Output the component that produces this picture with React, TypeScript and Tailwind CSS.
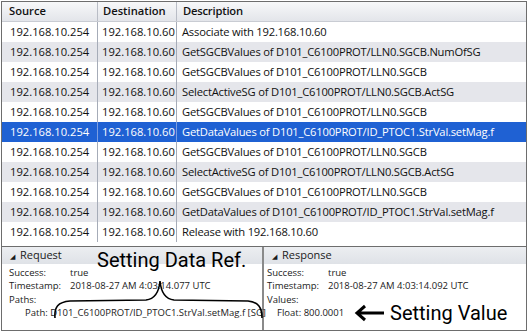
const rows: [string, string, string][] = [
  ['192.168.10.254', '192.168.10.60', 'Associate with 192.168.10.60'],
  ['192.168.10.254', '192.168.10.60', 'GetSGCBValues of D101_C6100PROT/LLN0.SGCB.NumOfSG'],
  ['192.168.10.254', '192.168.10.60', 'GetSGCBValues of D101_C6100PROT/LLN0.SGCB'],
  ['192.168.10.254', '192.168.10.60', 'SelectActiveSG of D101_C6100PROT/LLN0.SGCB.ActSG'],
  ['192.168.10.254', '192.168.10.60', 'GetSGCBValues of D101_C6100PROT/LLN0.SGCB'],
  ['192.168.10.254', '192.168.10.60', 'GetDataValues of D101_C6100PROT/ID_PTOC1.StrVal.setMag.f'],
  ['192.168.10.254', '192.168.10.60', 'GetSGCBValues of D101_C6100PROT/LLN0.SGCB'],
  ['192.168.10.254', '192.168.10.60', 'SelectActiveSG of D101_C6100PROT/LLN0.SGCB.ActSG'],
  ['192.168.10.254', '192.168.10.60', 'GetSGCBValues of D101_C6100PROT/LLN0.SGCB'],
  ['192.168.10.254', '192.168.10.60', 'GetDataValues of D101_C6100PROT/ID_PTOC1.StrVal.setMag.f'],
  ['192.168.10.254', '192.168.10.60', 'Release with 192.168.10.60'],
]

const SELECTED = 5

function PanelHeader({ title }: { title: string }) {
  return (
    <div className="h-[17px] flex items-center gap-[5px] pl-[8px] bg-gradient-to-b from-[#eceef1] to-[#dfe2e7] text-[11px] text-[#1a1a1a]">
      <span className="text-[7px] leading-none mt-[1px]">◢</span>
      <span>{title}</span>
    </div>
  )
}

function Field({ label, value }: { label: string; value: string }) {
  return (
    <div className="flex h-[13.5px] items-center">
      <span className="w-[61px] shrink-0">{label}</span>
      <span>{value}</span>
    </div>
  )
}

export default function App() {
  return (
    <div
      className="w-[529px] h-[333px] bg-white pt-[1px] pl-[1px] relative overflow-hidden"
      style={{ fontFamily: '"Open Sans", "Noto Sans", sans-serif' }}
    >
      <div className="w-[526px] h-[330px] border border-[#6d6d6d] flex flex-col">
        {/* Table */}
        <div className="h-[244px] text-[11.2px] text-[#111]">
          <div className="flex h-[20px] bg-gradient-to-b from-[#f7f8f9] to-[#e3e5ea] border-b border-[#c9ccd3] font-semibold">
            <div className="w-[96px] pl-[7px] flex items-center border-r border-[#b9bdc6]">Source</div>
            <div className="w-[79px] pl-[5px] flex items-center border-r border-[#b9bdc6]">Destination</div>
            <div className="flex-1 pl-[6px] flex items-center tracking-[-0.2px]">Description</div>
          </div>
          {rows.map((r, i) => {
            const sel = i === SELECTED
            const bg = sel ? 'bg-[#1f61d3] text-white' : i % 2 === 1 ? 'bg-[#e5e6eb]' : 'bg-white'
            return (
              <div key={i} className={`flex h-[20px] ${bg}`}>
                <div className={`w-[96px] pl-[8px] flex items-center border-r ${sel ? 'border-[#7d9ee0]' : 'border-[#a6acb8]'}`}>{r[0]}</div>
                <div className={`w-[79px] pl-[4px] flex items-center border-r ${sel ? 'border-[#7d9ee0]' : 'border-[#a6acb8]'}`}>{r[1]}</div>
                <div className="flex-1 pl-[5px] flex items-center whitespace-nowrap tracking-[-0.2px]">{r[2]}</div>
              </div>
            )
          })}
        </div>

        {/* Detail panels */}
        <div className="flex-1 grid grid-cols-2 border-t border-[#6d6d6d] text-[9.5px] text-[#1a1a1a]">
          <div className="border-r-2 border-[#8a8a8a] flex flex-col">
            <PanelHeader title="Request" />
            <div className="pl-[7px] pt-[2px]">
              <Field label="Success:" value="true" />
              <Field label="Timestamp:" value="2018-08-27 AM 4:03:14.077 UTC" />
              <div className="h-[13.5px] flex items-center">Paths:</div>
              <div className="h-[13.5px] flex items-center pl-[16px] whitespace-nowrap">
                Path: D101_C6100PROT/ID_PTOC1.StrVal.setMag.f [SG]
              </div>
            </div>
          </div>
          <div className="flex flex-col">
            <PanelHeader title="Response" />
            <div className="pl-[3px] pt-[2px]">
              <Field label="Success:" value="true" />
              <Field label="Timestamp:" value="2018-08-27 AM 4:03:14.092 UTC" />
              <div className="h-[13.5px] flex items-center">Values:</div>
              <div className="h-[13.5px] flex items-center pl-[10px]">Float: 800.0001</div>
            </div>
          </div>
        </div>
      </div>

      {/* Annotations */}
      <div
        className="absolute left-[97px] top-[250px] text-[20px] leading-none text-black whitespace-nowrap"
        style={{ fontFamily: 'Roboto, sans-serif' }}
      >
        Setting Data Ref.
      </div>
      <svg className="absolute left-0 top-0" width="529" height="333" viewBox="0 0 529 333">
        <path
          d="M55 318 C54 307 58 302 70 301 L146 300 C155 299 159 292 160 281 C161 292 165 299 174 300 L248 301 C258 302 262 307 262 318"
          fill="none"
          stroke="#000"
          strokeWidth="1.6"
        />
        <path d="M384 313 H358 M365 306 L357 313 L365 320" fill="none" stroke="#000" strokeWidth="3" strokeLinejoin="miter" />
      </svg>
      <div
        className="absolute left-[390px] top-[303px] text-[20px] leading-none text-black whitespace-nowrap"
        style={{ fontFamily: 'Roboto, sans-serif' }}
      >
        Setting Value
      </div>
    </div>
  )
}
